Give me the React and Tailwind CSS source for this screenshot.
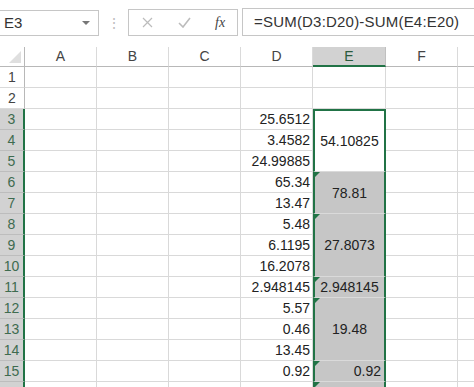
import React from "react";

const dValues = {
  3: "25.6512",
  4: "3.4582",
  5: "24.99885",
  6: "65.34",
  7: "13.47",
  8: "5.48",
  9: "6.1195",
  10: "16.2078",
  11: "2.948145",
  12: "5.57",
  13: "0.46",
  14: "13.45",
  15: "0.92",
};

// merged blocks in column E, keyed by start row
const eCells = {
  1: { span: "", text: "" },
  2: { span: "", text: "" },
  3: { span: "row-span-3", text: "54.10825", active: true },
  6: { span: "row-span-2", text: "78.81", tri: true },
  8: { span: "row-span-3", text: "27.8073", tri: true },
  11: { span: "", text: "2.948145", tri: true },
  12: { span: "row-span-3", text: "19.48", tri: true },
  15: { span: "", text: "0.92", tri: true, right: true },
  16: { span: "", text: "", tri: true },
};

const rows = Array.from({ length: 16 }, (_, i) => i + 1);

function Tri() {
  return (
    <span className="absolute top-0 left-0 w-0 h-0 border-t-[5px] border-r-[5px] border-t-[#217346] border-r-transparent" />
  );
}

function ECell({ row, cell }) {
  if (row < 3) {
    return <div className="border-r border-b border-[#d9d9d9]" />;
  }
  const bg = cell.active ? "bg-white" : "bg-[#c6c6c6]";
  const top = row === 3 ? "border-t-2 border-t-[#217346]" : "";
  return (
    <div
      className={`relative ${cell.span} ${bg} ${top} border-x-2 border-x-[#217346] border-b border-b-[#dadada] flex items-center ${
        cell.right ? "justify-end pr-[3px]" : "justify-center"
      }`}
    >
      {cell.tri && <Tri />}
      <span className="text-[14px] text-[#222] leading-none">{cell.text}</span>
    </div>
  );
}

export default function App() {
  return (
    <div
      className="w-[474px] h-[387px] overflow-hidden bg-white text-[#222]"
      style={{ fontFamily: '"Liberation Sans", Arial, sans-serif' }}
    >
      {/* formula bar */}
      <div className="h-[47px] flex items-start pt-[9px]">
        <div className="-ml-px mt-px w-[100px] h-[26px] border border-[#c6c6c6] flex items-center justify-between pl-[4px] pr-[8px]">
          <span className="text-[15px] text-[#333]">E3</span>
          <span className="w-0 h-0 border-x-[4px] border-t-[4px] border-x-transparent border-t-[#777]" />
        </div>
        <div className="w-[29px] h-[27px] flex items-center justify-center text-[#bdbdbd] text-[14px] leading-none">
          ⋮
        </div>
        <div className="w-[110px] h-[27px] border border-[#c6c6c6] flex items-center pl-[12px]">
          <svg width="11" height="11" viewBox="0 0 11 11" className="ml-[1px]">
            <path d="M1 1L10 10M10 1L1 10" stroke="#bcbcbc" strokeWidth="1.2" fill="none" />
          </svg>
          <svg width="13" height="11" viewBox="0 0 13 11" className="ml-[25px]">
            <path d="M1 6L5 10L12 1" stroke="#bcbcbc" strokeWidth="1.6" fill="none" />
          </svg>
          <span
            className="ml-[24px] text-[14px] italic text-[#444]"
            style={{ fontFamily: '"Liberation Serif", serif' }}
          >
            fx
          </span>
        </div>
        <div className="ml-[4px] flex-1 h-[28px] -mt-px border border-r-0 border-[#c6c6c6] flex items-center pl-[11px]">
          <span className="text-[15px] text-[#333] tracking-[0.2px]">=SUM(D3:D20)-SUM(E4:E20)</span>
        </div>
      </div>

      {/* sheet grid */}
      <div className="grid grid-cols-[25px_72px_72px_72px_72px_73px_72px_1fr] grid-rows-[20px_repeat(16,21px)]">
        {/* header row */}
        <div className="relative border-r border-b border-[#b8b8b8] bg-white">
          <svg width="12" height="12" viewBox="0 0 12 12" className="absolute right-[3px] bottom-[3px]">
            <path d="M12 0L12 12L0 12Z" fill="#dfdfdf" />
          </svg>
        </div>
        {["A", "B", "C", "D"].map((c) => (
          <div
            key={c}
            className="border-r border-b border-r-[#dadada] border-b-[#b8b8b8] flex items-center justify-center text-[14px] text-[#444]"
          >
            {c}
          </div>
        ))}
        <div className="bg-[#d2d2d2] border-r border-r-[#c0c0c0] border-b-2 border-b-[#217346] flex items-center justify-center text-[14px] text-[#2a5a3c]">
          E
        </div>
        <div className="border-r border-b border-r-[#dadada] border-b-[#b8b8b8] flex items-center justify-center text-[14px] text-[#444]">
          F
        </div>
        <div className="border-b border-b-[#b8b8b8]" />

        {rows.map((r) => {
          const sel = r >= 3;
          return (
            <React.Fragment key={r}>
              <div
                className={`flex items-center justify-center text-[14px] border-b ${
                  sel
                    ? "bg-[#d2d2d2] text-[#3e6b4f] border-r-2 border-r-[#217346] border-b-[#bdbdbd]"
                    : "bg-white text-[#444] border-r border-r-[#b8b8b8] border-b-[#dadada]"
                }`}
              >
                {r < 16 ? r : ""}
              </div>
              <div className="border-r border-b border-[#d9d9d9]" />
              <div className="border-r border-b border-[#d9d9d9]" />
              <div className="border-r border-b border-[#d9d9d9]" />
              <div className="border-r border-b border-[#d9d9d9] flex items-center justify-end pr-[2px] text-[14px] text-[#222]">
                {dValues[r] || ""}
              </div>
              {eCells[r] && <ECell row={r} cell={eCells[r]} />}
              <div className="border-r border-b border-[#d9d9d9]" />
              <div className="border-b border-[#d9d9d9]" />
            </React.Fragment>
          );
        })}
      </div>
    </div>
  );
}
